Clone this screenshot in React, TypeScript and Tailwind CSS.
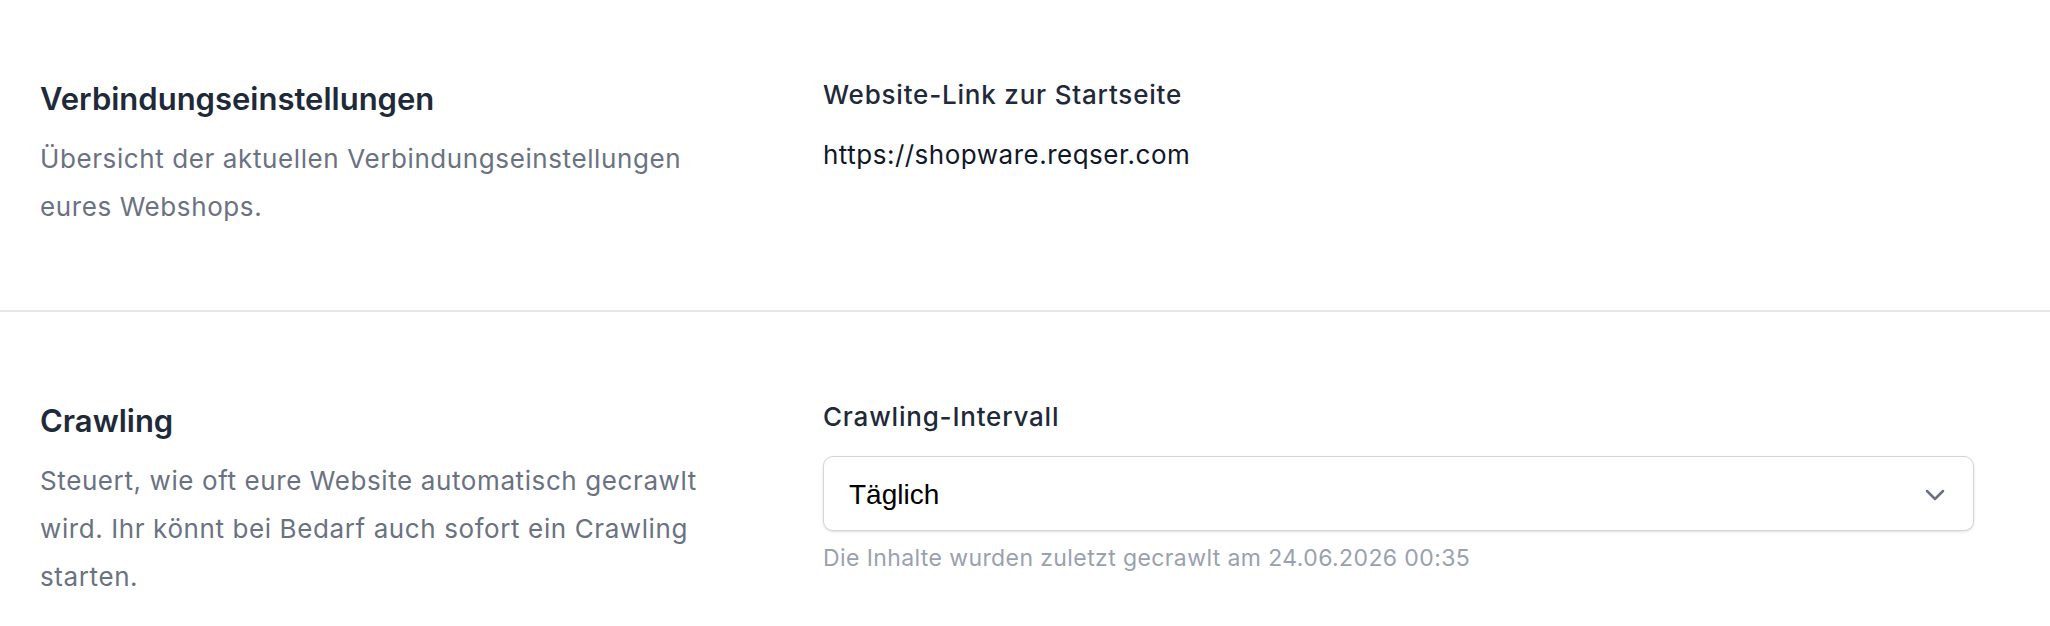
import { ChevronDown } from "lucide-react"

export default function App() {
  return (
    <div className="min-h-screen bg-white font-['Inter',sans-serif] text-gray-900">
      {/* Connection settings */}
      <section className="flex pl-10 pt-[78px] pb-[79px]">
        <div className="w-[783px] shrink-0 pt-px">
          <h2 className="text-[31px] leading-[40px] font-semibold text-gray-800">Verbindungseinstellungen</h2>
          <p className="mt-[16px] w-[690px] text-[26px] leading-[48px] tracking-[0.6px] text-gray-500">
            Übersicht der aktuellen Verbindungseinstellungen eures Webshops.
          </p>
        </div>
        <div className="flex-1 pr-[76px] pt-px">
          <div className="text-[26px] leading-[32px] font-medium tracking-[0.8px] text-gray-800">Website-Link zur Startseite</div>
          <div className="mt-6 text-[26px] leading-[40px] tracking-[0.5px] text-gray-900">https://shopware.reqser.com</div>
        </div>
      </section>

      <div className="h-[2px] bg-gray-200" />

      {/* Crawling */}
      <section className="flex pl-10 pt-[89px] pb-10">
        <div className="w-[783px] shrink-0">
          <h2 className="text-[31px] leading-[40px] font-semibold text-gray-800">Crawling</h2>
          <p className="mt-[16px] w-[690px] text-[26px] leading-[48px] tracking-[0.6px] text-gray-500">
            Steuert, wie oft eure Website automatisch gecrawlt wird. Ihr könnt bei Bedarf auch sofort ein Crawling starten.
          </p>
        </div>
        <div className="flex-1 pr-[76px]">
          <div className="text-[26px] leading-[32px] font-medium tracking-[0.8px] text-gray-800">Crawling-Intervall</div>
          <div className="mt-[23px] flex h-[75px] items-center justify-between rounded-[10px] border border-gray-300 bg-white pl-[25px] pr-[22px] pt-[2px] shadow-sm">
            <span className="font-['Liberation_Sans',Arial,sans-serif] text-[28px] text-black">Täglich</span>
            <ChevronDown className="h-[32px] w-[32px] text-gray-500" strokeWidth={1.9} />
          </div>
          <p className="mt-[11px] text-[23px] leading-[32px] tracking-[0.4px] text-gray-400">
            Die Inhalte wurden zuletzt gecrawlt am 24.06.2026 00:35
          </p>
        </div>
      </section>
    </div>
  )
}
